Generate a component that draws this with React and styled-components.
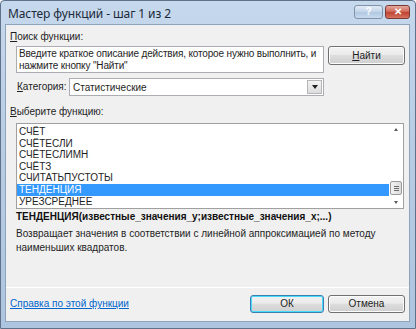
import React from "react";
import styled, { createGlobalStyle } from "styled-components";

const GlobalStyle = createGlobalStyle`
  html, body {
    margin: 0;
    padding: 0;
    background: #ffffff;
  }
  * {
    box-sizing: border-box;
  }
`;

const font = `"Liberation Sans", Arial, sans-serif`;

// Window frame
const Window = styled.div`
  width: 416px;
  height: 329px;
  display: flex;
  flex-direction: column;
  background: linear-gradient(180deg, #c6d8ec 0%, #b9cde4 40%, #aec5df 100%);
  border: 1px solid #5f7289;
  border-radius: 4px 4px 0 0;
  padding: 0 5px 6px 4px;
  font-family: ${font};
  font-size: 10px;
  color: #1e1e1e;
`;

const TitleBar = styled.div`
  height: 23px;
  flex: none;
  display: flex;
  align-items: center;
  justify-content: space-between;
  padding-left: 3px;
`;

const Title = styled.div`
  font-family: "Noto Sans", sans-serif;
  font-size: 12px;
  color: #1b2a3a;
  letter-spacing: -0.1px;
  margin-top: 2px;
`;

const Caption = styled.div`
  display: flex;
  gap: 2px;
  align-self: flex-start;
  margin-top: 4px;
`;

const CaptionButton = styled.div`
  width: ${({ $w }) => $w}px;
  height: 14px;
  display: flex;
  align-items: center;
  justify-content: center;
  border: 1px solid ${({ $close }) => ($close ? "#7a3a36" : "#7f93aa")};
  border-radius: 3px;
  background: ${({ $close }) =>
    $close
      ? "linear-gradient(180deg, #e5a89d 0%, #d16b5c 45%, #c04431 55%, #d5735f 100%)"
      : "linear-gradient(180deg, #e1ebf6 0%, #c5d6ea 45%, #b2c8e2 55%, #c8daee 100%)"};
  color: #ffffff;
  font-weight: bold;
  font-size: 10px;
  line-height: 1;
`;

const Panel = styled.div`
  flex: 1;
  display: flex;
  flex-direction: column;
  background: #f0f0f0;
  border: 1px solid #8ea4bd;
  padding: 5px 4px 0 4px;
`;

const Label = styled.div`
  height: 14px;
  line-height: 14px;
  width: ${({ $w }) => ($w ? `${$w}px` : "auto")};
  margin-top: ${({ $top }) => $top || 0}px;

  u {
    text-decoration: underline;
  }
`;

const SearchRow = styled.div`
  display: flex;
  align-items: flex-start;
  gap: 4px;
  margin-top: 2px;
  padding-left: 6px;
`;

const SearchBox = styled.div`
  width: 308px;
  height: 27px;
  background: #ffffff;
  border: 1px solid #abadb3;
  padding: 1px 2px;
  line-height: 12px;
  letter-spacing: -0.15px;
  color: #1e1e1e;
`;

const Button = styled.div`
  width: ${({ $w }) => $w || 77}px;
  height: ${({ $h }) => $h || 19}px;
  display: flex;
  align-items: center;
  justify-content: center;
  border: 1px solid ${({ $default }) => ($default ? "#3c7fb1" : "#707070")};
  border-radius: 3px;
  background: linear-gradient(180deg, #f2f2f2 0%, #ebebeb 45%, #dddddd 50%, #cfcfcf 100%);
  box-shadow: ${({ $default }) => ($default ? "inset 0 0 0 1px #48d9ff" : "inset 0 0 0 1px #fcfcfc")};
  color: #1e1e1e;

  u {
    text-decoration: underline;
  }
`;

const CategoryRow = styled.div`
  display: flex;
  align-items: center;
  margin-top: 5px;
  padding-left: 7px;
`;

const Select = styled.div`
  width: 255px;
  height: 18px;
  display: flex;
  align-items: center;
  justify-content: space-between;
  background: #ffffff;
  border: 1px solid #abadb3;
  padding: 0 1px 0 3px;
`;

const DropArrow = styled.div`
  width: 15px;
  height: 14px;
  display: flex;
  align-items: center;
  justify-content: center;
  border: 1px solid #b5b5b5;
  background: linear-gradient(180deg, #f4f4f4, #dcdcdc);

  &::after {
    content: "";
    border-left: 3px solid transparent;
    border-right: 3px solid transparent;
    border-top: 4px solid #202020;
  }
`;

const ListBox = styled.div`
  margin-top: 4px;
  margin-left: 6px;
  width: 388px;
  height: 86px;
  display: flex;
  background: #ffffff;
  border: 1px solid #a0a0a0;
`;

const Items = styled.div`
  flex: 1;
  padding-top: 2px;
`;

const Item = styled.div`
  height: 11.6px;
  line-height: 11.6px;
  padding-left: 2px;
  background: ${({ $selected }) => ($selected ? "#3399ff" : "transparent")};
  color: ${({ $selected }) => ($selected ? "#ffffff" : "#1e1e1e")};
  white-space: nowrap;
`;

const ScrollBar = styled.div`
  width: 14px;
  display: flex;
  flex-direction: column;
  align-items: center;
  justify-content: space-between;
  padding: 4px 0 4px;
`;

const ArrowUp = styled.div`
  border-left: 2px solid transparent;
  border-right: 2px solid transparent;
  border-bottom: 3px solid #5a5a5a;
`;

const ArrowDown = styled.div`
  border-left: 2px solid transparent;
  border-right: 2px solid transparent;
  border-top: 3px solid #5a5a5a;
`;

const Thumb = styled.div`
  width: 12px;
  height: 14px;
  margin-top: auto;
  margin-bottom: 6px;
  border: 1px solid #9a9a9a;
  border-radius: 2px;
  background: linear-gradient(90deg, #f2f2f2, #dcdcdc);
  display: flex;
  flex-direction: column;
  justify-content: center;
  align-items: center;
  gap: 1px;

  span {
    width: 5px;
    height: 1px;
    background: #6a6a6a;
  }
`;

const Signature = styled.div`
  margin-top: 1px;
  margin-left: 6px;
  font-weight: bold;
  height: 14px;
  line-height: 14px;
  color: #101010;
`;

const Description = styled.div`
  margin-top: 3px;
  margin-left: 6px;
  width: 360px;
  line-height: 14px;
`;

const Separator = styled.div`
  margin-top: auto;
  margin-left: -4px;
  margin-right: -4px;
  height: 1px;
  background: #dfdfdf;
  border-bottom: 1px solid #ffffff;
`;

const Footer = styled.div`
  height: 33px;
  display: flex;
  align-items: center;
  gap: 4px;
  padding-bottom: 2px;
`;

const HelpLink = styled.a`
  color: #0066cc;
  text-decoration: underline;
  margin-right: auto;
  cursor: pointer;
`;

const functions = [
  "СЧЁТ",
  "СЧЁТЕСЛИ",
  "СЧЁТЕСЛИМН",
  "СЧЁТЗ",
  "СЧИТАТЬПУСТОТЫ",
  "ТЕНДЕНЦИЯ",
  "УРЕЗСРЕДНЕЕ",
];

const App = () => {
  return (
    <>
      <GlobalStyle />
      <Window>
        <TitleBar>
          <Title>Мастер функций - шаг 1 из 2</Title>
          <Caption>
            <CaptionButton $w={29}>?</CaptionButton>
            <CaptionButton $w={25} $close>
              ✕
            </CaptionButton>
          </Caption>
        </TitleBar>
        <Panel>
          <Label>
            <u>П</u>оиск функции:
          </Label>
          <SearchRow>
            <SearchBox>
              Введите краткое описание действия, которое нужно выполнить, и
              нажмите кнопку "Найти"
            </SearchBox>
            <Button>
              <u>Н</u>айти
            </Button>
          </SearchRow>
          <CategoryRow>
            <Label $w={52}>
              <u>К</u>атегория:
            </Label>
            <Select>
              Статистические
              <DropArrow />
            </Select>
          </CategoryRow>
          <Label $top={9}>
            <u>В</u>ыберите функцию:
          </Label>
          <ListBox>
            <Items>
              {functions.map((name) => (
                <Item key={name} $selected={name === "ТЕНДЕНЦИЯ"}>
                  {name}
                </Item>
              ))}
            </Items>
            <ScrollBar>
              <ArrowUp />
              <Thumb>
                <span />
                <span />
                <span />
              </Thumb>
              <ArrowDown />
            </ScrollBar>
          </ListBox>
          <Signature>
            ТЕНДЕНЦИЯ(известные_значения_y;известные_значения_x;...)
          </Signature>
          <Description>
            Возвращает значения в соответствии с линейной аппроксимацией по методу
            наименьших квадратов.
          </Description>
          <Separator />
          <Footer>
            <HelpLink>Справка по этой функции</HelpLink>
            <Button $w={74} $h={18} $default>
              ОК
            </Button>
            <Button $h={18}>Отмена</Button>
          </Footer>
        </Panel>
      </Window>
    </>
  );
};

export default App;
